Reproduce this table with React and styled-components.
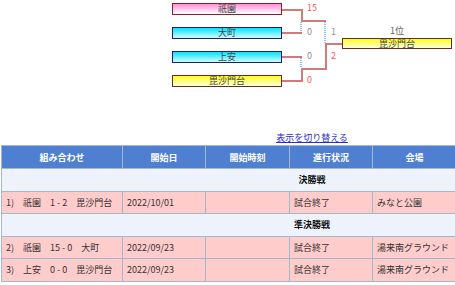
import React from "react";
import styled, { createGlobalStyle } from "styled-components";

const GlobalStyle = createGlobalStyle`
  body {
    margin: 0;
    background: #fff;
    color: #333;
    font-family: "Noto Sans CJK JP", "Noto Sans", sans-serif;
    font-size: 9px;
    overflow: hidden;
  }
`;

const Page = styled.div`
  width: 624px;
`;

const Bracket = styled.div`
  display: flex;
  width: 280px;
  height: 90px;
  margin: 0 auto;
`;

const TeamColumn = styled.div`
  width: 110px;
  display: flex;
  flex-direction: column;
  gap: 12px;
  padding-top: 3px;
`;

const Connector = styled.div`
  position: relative;
  width: 60px;
  height: 90px;
`;

const FinalColumn = styled.div`
  width: 110px;
  display: flex;
  flex-direction: column;
  align-items: stretch;
  gap: 2px;
  padding-top: 26px;
`;

const TEAM_COLORS = {
  pink: { border: "#8a1f2a", bg: "linear-gradient(#ff8fdc, #ffffff)" },
  cyan: { border: "#1c1f7a", bg: "linear-gradient(#00e6fa, #d4fbff)" },
  yellow: { border: "#6e2a1c", bg: "linear-gradient(#ffff1a, #ffffe0)" },
};

const TeamBox = styled.div`
  height: ${(p) => p.$h || 12}px;
  box-sizing: border-box;
  border: 1px solid ${(p) => TEAM_COLORS[p.$color].border};
  background: ${(p) => TEAM_COLORS[p.$color].bg};
  display: flex;
  align-items: center;
  justify-content: center;
  font-size: 9px;
  line-height: 10px;
  color: #444;
`;

const Score = styled.span`
  position: absolute;
  left: ${(p) => p.$x}px;
  top: ${(p) => p.$y}px;
  font-size: 9px;
  line-height: 10px;
  color: ${(p) => (p.$win ? "#f25a5a" : "#8a8f98")};
`;

const Rank = styled.div`
  text-align: center;
  font-size: 9px;
  line-height: 10px;
  color: #666;
`;

const SwitchRow = styled.div`
  padding-top: 42px;
  text-align: center;
  line-height: 12px;
  margin-bottom: 1px;
`;

const SwitchLink = styled.a`
  color: #2c2ccc;
  text-decoration: underline;
  cursor: pointer;
`;

const Table = styled.table`
  margin-left: 1px;
  width: 621px;
  table-layout: fixed;
  border-collapse: collapse;
  font-size: 9px;
`;

const Th = styled.th`
  height: 22px;
  padding: 0 4px;
  background: #4f7fd0;
  color: #fff;
  font-weight: bold;
  border: 1px solid #a3b8cb;
  text-align: center;
`;

const RoundCell = styled.td`
  height: 21.5px;
  padding: 0;
  background: #eef3fb;
  border: 1px solid #a3b8cb;
  text-align: center;
  font-weight: bold;
  color: #111;
`;

const Td = styled.td`
  height: 21.5px;
  padding: 0 4px;
  background: #ffcccc;
  border: 1px solid #a3b8cb;
  color: #333;
  white-space: nowrap;
  overflow: hidden;
`;

const RED = "#d07a7a";
const BLUE = "#8fbdf0";

const games = [
  { round: "決勝戦" },
  { no: 1, a: "祇園", b: "毘沙門台", score: "1 - 2", date: "2022/10/01", status: "試合終了", place: "みなと公園" },
  { round: "準決勝戦" },
  { no: 2, a: "祇園", b: "大町", score: "15 - 0", date: "2022/09/23", status: "試合終了", place: "湯来南グラウンド" },
  { no: 3, a: "上安", b: "毘沙門台", score: "0 - 0", date: "2022/09/23", status: "試合終了", place: "湯来南グラウンド" },
];

const App = () => {
  return (
    <Page>
      <GlobalStyle />
      <Bracket>
        <TeamColumn>
          <TeamBox $color="pink">祇園</TeamBox>
          <TeamBox $color="cyan">大町</TeamBox>
          <TeamBox $color="cyan">上安</TeamBox>
          <TeamBox $color="yellow">毘沙門台</TeamBox>
        </TeamColumn>
        <Connector>
          <svg width="60" height="90">
            <g fill="none" strokeWidth="2">
              <path d="M0 10 H20 V22" stroke={RED} />
              <path d="M19 21 H44" stroke={RED} />
              <path d="M19 22 V32" stroke={BLUE} strokeDasharray="1 1" />
              <path d="M0 33 H20" stroke={RED} />
              <path d="M0 57 H20" stroke={RED} />
              <path d="M19 58 V68" stroke={BLUE} strokeDasharray="1 1" />
              <path d="M0 81 H20 V68" stroke={RED} />
              <path d="M19 69 H44 V44" stroke={RED} />
              <path d="M43 22 V43" stroke={BLUE} strokeDasharray="1 1" />
              <path d="M43 44 H60" stroke={RED} />
            </g>
          </svg>
          <Score $x={25} $y={3} $win>15</Score>
          <Score $x={25} $y={27}>0</Score>
          <Score $x={25} $y={51}>0</Score>
          <Score $x={25} $y={75} $win>0</Score>
          <Score $x={49} $y={27}>1</Score>
          <Score $x={49} $y={51} $win>2</Score>
        </Connector>
        <FinalColumn>
          <Rank>1位</Rank>
          <TeamBox $h={11} $color="yellow">毘沙門台</TeamBox>
        </FinalColumn>
      </Bracket>
      <SwitchRow>
        <SwitchLink>表示を切り替える</SwitchLink>
      </SwitchRow>
      <Table>
        <colgroup>
          <col style={{ width: 121 }} />
          <col style={{ width: 83 }} />
          <col style={{ width: 84 }} />
          <col style={{ width: 83 }} />
          <col style={{ width: 84 }} />
          <col style={{ width: 166 }} />
        </colgroup>
        <thead>
          <tr>
            <Th>組み合わせ</Th>
            <Th>開始日</Th>
            <Th>開始時刻</Th>
            <Th>進行状況</Th>
            <Th>会場</Th>
            <Th></Th>
          </tr>
        </thead>
        <tbody>
          {games.map((g, i) =>
            g.round ? (
              <tr key={i}>
                <RoundCell colSpan={6}>{g.round}</RoundCell>
              </tr>
            ) : (
              <tr key={i}>
                <Td>
                  {g.no})　{g.a}　{g.score}　{g.b}
                </Td>
                <Td>{g.date}</Td>
                <Td></Td>
                <Td>{g.status}</Td>
                <Td>{g.place}</Td>
                <Td></Td>
              </tr>
            )
          )}
        </tbody>
      </Table>
    </Page>
  );
};

export default App;
